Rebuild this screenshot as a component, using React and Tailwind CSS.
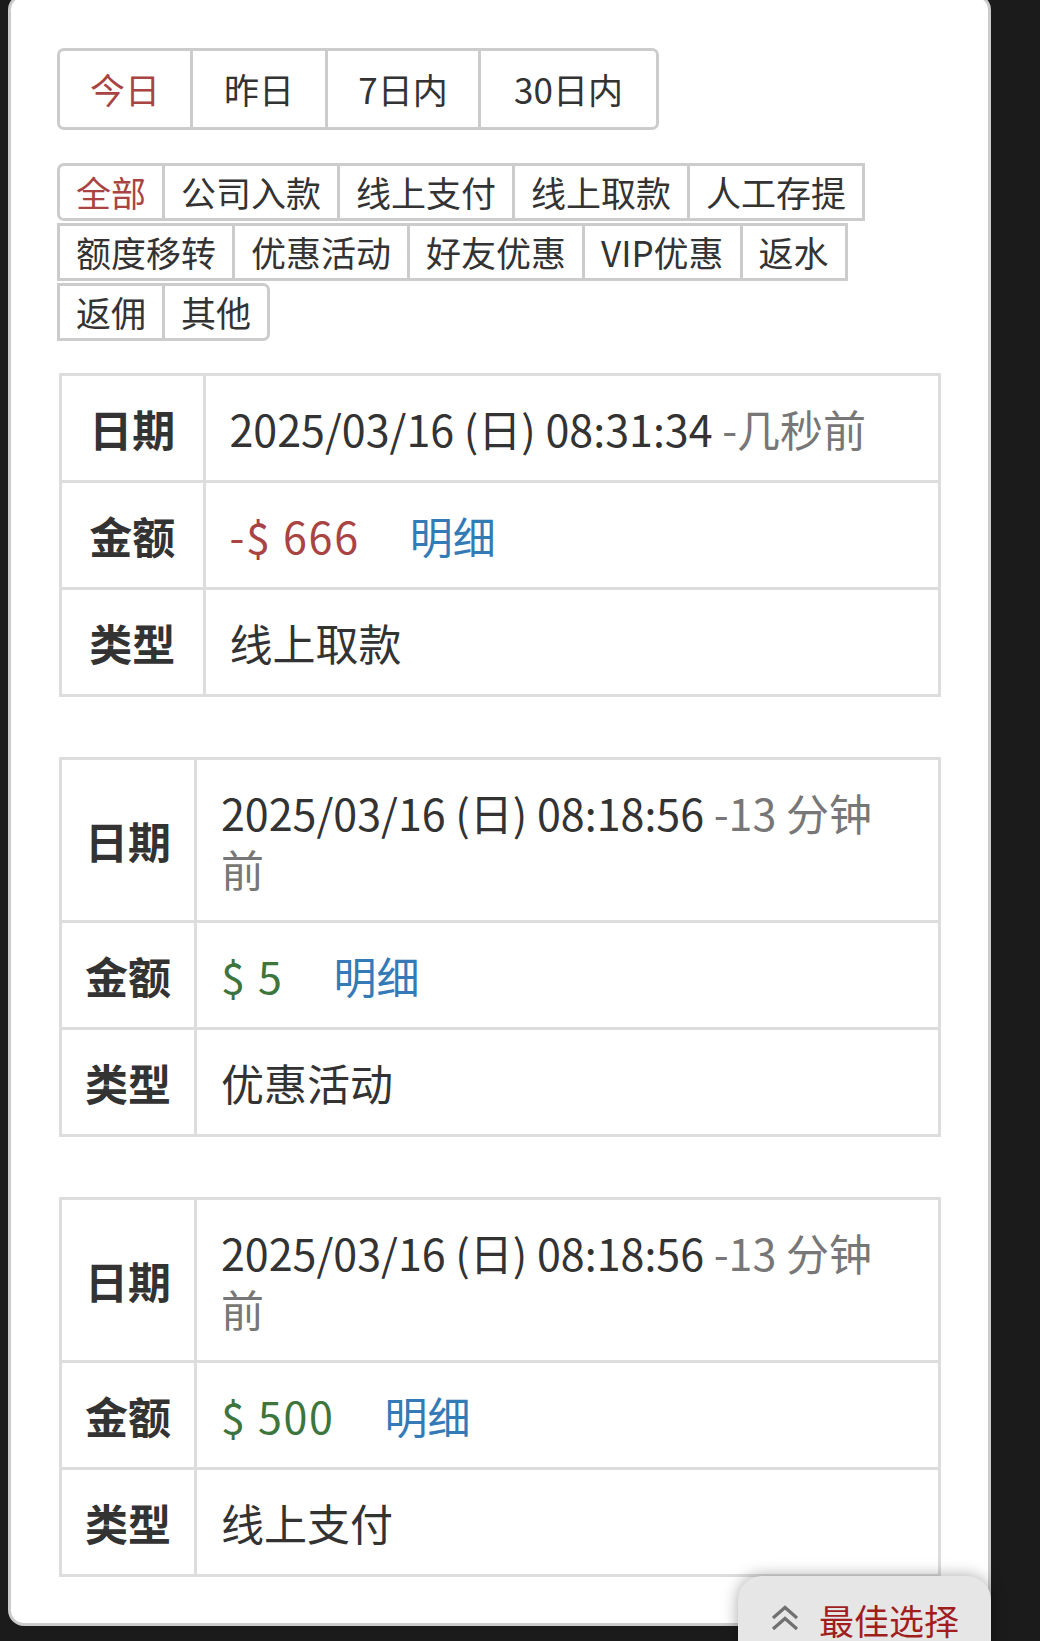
import React from "react";

const FONT = { fontFamily: '"Noto Sans CJK SC", "Noto Sans", sans-serif' };

function DateTabs() {
  const tabs = [
    { t: "今日", w: "w-[130px]", active: true },
    { t: "昨日", w: "w-[135px]" },
    { t: "7日内", w: "w-[153px]" },
    { t: "30日内", w: "w-[178px]" },
  ];
  return (
    <div className="flex w-max rounded-[7px] border-[3px] border-[#ccc]">
      {tabs.map((x, i) => (
        <div
          key={x.t}
          className={`${x.w} flex h-[76px] items-center justify-center text-[35px] ${
            i > 0 ? "border-l-[3px] border-[#ccc]" : ""
          } ${x.active ? "text-[#a94442]" : "text-[#333]"}`}
        >
          {x.t}
        </div>
      ))}
    </div>
  );
}

function CatRow({ items, first, last }) {
  return (
    <div className="flex">
      {items.map((t, i) => {
        const isFirst = first && i === 0;
        const isLast = last && i === items.length - 1;
        return (
          <div
            key={t}
            className={`border-[3px] border-[#ccc] px-[16px] text-[35px] leading-[52px] ${
              i > 0 ? "-ml-[3px]" : ""
            } ${isFirst ? "rounded-l-[7px] text-[#a94442]" : "text-[#333]"} ${
              isLast ? "rounded-r-[7px]" : ""
            }`}
          >
            {t}
          </div>
        );
      })}
    </div>
  );
}

function Categories() {
  return (
    <div className="flex flex-col gap-y-[2px]">
      <CatRow first items={["全部", "公司入款", "线上支付", "线上取款", "人工存提"]} />
      <CatRow items={["额度移转", "优惠活动", "好友优惠", "VIP优惠", "返水"]} />
      <CatRow last items={["返佣", "其他"]} />
    </div>
  );
}

function Row({ label, labelW, top, children }) {
  return (
    <div className={`flex ${top ? "" : "border-t-[3px] border-[#ddd]"}`}>
      <div
        className={`${labelW} shrink-0 border-r-[3px] border-[#ddd] flex items-center justify-center font-bold py-[24px]`}
      >
        {label}
      </div>
      <div className="flex-1 min-w-0 pl-[24px] pr-[40px] py-[24px]">{children}</div>
    </div>
  );
}

function Record({ labelW, date, ago, amount, amountColor, type }) {
  return (
    <div className="ml-[2px] w-[882px] border-[3px] border-[#ddd] text-[43px] leading-[56px] text-[#333]">
      <Row top label="日期" labelW={labelW}>
        {date} <span className="text-[#777]">{ago}</span>
      </Row>
      <Row label="金额" labelW={labelW}>
        <span className={`${amountColor} tracking-[1.7px]`}>{amount}</span>
        <span className="ml-[50px] text-[#337ab7]">明细</span>
      </Row>
      <Row label="类型" labelW={labelW}>
        {type}
      </Row>
    </div>
  );
}

export default function App() {
  return (
    <div
      className="relative h-[1641px] w-[1040px] overflow-hidden bg-[#1b1b1b]"
      style={FONT}
    >
      <div className="-mt-[6px] ml-[8px] h-[1632px] w-[983px] rounded-[16px] border-[3px] border-[#cbcbcb] bg-white pl-[46px] pt-[51px]">
        <DateTabs />
        <div className="mt-[33px]">
          <Categories />
        </div>
        <div className="mt-[32px] flex flex-col gap-[60px]">
          <Record
            labelW="w-[143.5px]"
            date="2025/03/16 (日) 08:31:34"
            ago="-几秒前"
            amount="-$ 666"
            amountColor="text-[#a94442]"
            type="线上取款"
          />
          <Record
            labelW="w-[135px]"
            date="2025/03/16 (日) 08:18:56"
            ago="-13 分钟前"
            amount="$ 5"
            amountColor="text-[#3c763d]"
            type="优惠活动"
          />
          <Record
            labelW="w-[135px]"
            date="2025/03/16 (日) 08:18:56"
            ago="-13 分钟前"
            amount="$ 500"
            amountColor="text-[#3c763d]"
            type="线上支付"
          />
        </div>
      </div>
      <div className="absolute left-[738px] top-[1576px] flex h-[100px] w-[253px] items-start rounded-t-[24px] bg-[#e6e6e6] pl-[33px] pt-[22px] shadow-[0_0_16px_rgba(0,0,0,0.35)]">
        <svg width="28" height="26" viewBox="0 0 28 26" className="mt-[7px]" fill="none" stroke="#707070" strokeWidth="3.2" strokeLinejoin="miter">
          <polyline points="2,13 14,2.5 26,13" />
          <polyline points="2,24 14,13.5 26,24" />
        </svg>
        <span className="ml-[20px] text-[35px] leading-[44px] text-[#a01e1e]">最佳选择</span>
      </div>
    </div>
  );
}
